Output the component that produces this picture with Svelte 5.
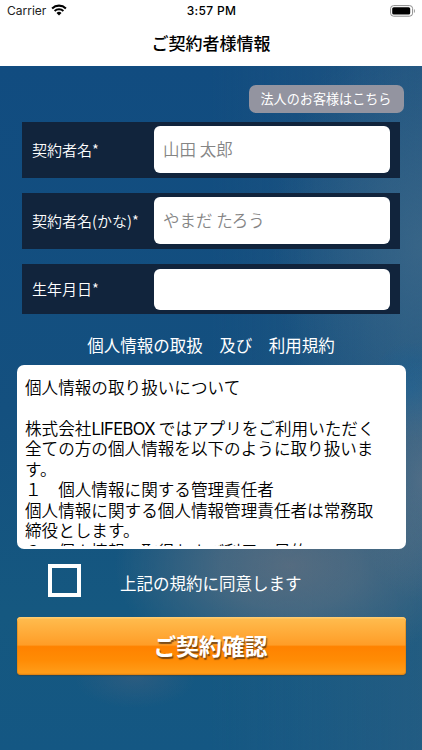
<script>
  const fields = [
    { label: '契約者名*', placeholder: '山田 太郎', size: 'tall' },
    { label: '契約者名(かな)*', placeholder: 'やまだ たろう', size: 'tall' },
    { label: '生年月日*', placeholder: '', size: 'short' }
  ];
  let agreed = $state(false);
</script>

<div class="screen">
  <header>
    <div class="status">
      <div class="carrier">
        <span>Carrier</span>
        <svg width="16" height="12" viewBox="0 0 16 12">
          <path d="M1.1 4.4a10 10 0 0 1 13.8 0" fill="none" stroke="#000" stroke-width="2.1" />
          <path d="M3.6 7a6.4 6.4 0 0 1 8.8 0" fill="none" stroke="#000" stroke-width="1.9" />
          <path d="M8 11.5 5.5 8.9a3.7 3.7 0 0 1 5 0z" />
        </svg>
      </div>
      <span class="time">3:57 PM</span>
      <svg class="battery" width="26" height="12" viewBox="0 0 26 12">
        <rect x="0.6" y="0.6" width="22" height="10.6" rx="3" fill="none" stroke="#8c8c8c" />
        <rect x="2.2" y="2.2" width="18" height="7.4" rx="1.6" />
        <path d="M24 4v4c1.2-.5 1.2-3.5 0-4z" fill="#8c8c8c" />
      </svg>
    </div>
    <h1>ご契約者様情報</h1>
  </header>

  <main>
    <button class="corporate">法人のお客様はこちら</button>
    <form class="fields">
      {#each fields as field}
        <label class="row {field.size}">
          <span>{field.label}</span>
          <input placeholder={field.placeholder} />
        </label>
      {/each}
    </form>

    <h2>個人情報の取扱　及び　利用規約</h2>
    <section class="terms">
      <div class="text">
        <p>個人情報の取り扱いについて</p>
        <p>&nbsp;</p>
        <p>株式会社<span class="latin">LIFEBOX</span> ではアプリをご利用いただく</p>
        <p>全ての方の個人情報を以下のように取り扱いま</p>
        <p>す。</p>
        <p>１　個人情報に関する管理責任者</p>
        <p>個人情報に関する個人情報管理責任者は常務取</p>
        <p>締役とします。</p>
        <p>２　個人情報の取得および利用の目的</p>
      </div>
    </section>

    <div class="agree">
      <button class="check" aria-label="同意" onclick={() => (agreed = !agreed)}>{agreed ? '✓' : ''}</button>
      <span>上記の規約に同意します</span>
    </div>
    <button class="confirm">ご契約確認</button>
  </main>
</div>

<style>
  :global(body) {
    margin: 0;
  }
  .screen {
    width: 422px;
    height: 750px;
    overflow: hidden;
    display: flex;
    flex-direction: column;
    font-family: 'Noto Sans CJK JP', sans-serif;
  }
  button,
  input {
    font-family: inherit;
    border: 0;
    padding: 0;
    box-sizing: border-box;
  }
  header {
    height: 65.5px;
    flex: none;
    background: #fff;
    color: #000;
  }
  .status {
    height: 22px;
    padding: 0 6px 0 7px;
    display: grid;
    grid-template-columns: 1fr auto 1fr;
    align-items: center;
    font: 12px/22px Inter, sans-serif;
  }
  .carrier {
    display: flex;
    align-items: center;
    gap: 5px;
    letter-spacing: 0;
    color: #222;
  }
  .carrier svg {
    margin-top: -2px;
  }
  .time {
    font-weight: 500;
    letter-spacing: 0.3px;
  }
  .battery {
    justify-self: end;
    margin-top: -1px;
  }
  h1 {
    margin: 0;
    font-size: 17px;
    font-weight: 500;
    line-height: 42px;
    text-align: center;
  }
  main {
    flex: 1;
    padding: 19.5px 16.5px 0;
    display: flex;
    flex-direction: column;
    background:
      radial-gradient(ellipse 175px 110px at 290px 500px, rgba(104, 114, 128, 0.75), rgba(98, 114, 130, 0.6) 40%, transparent),
      radial-gradient(ellipse 70px 120px at 422px 415px, rgba(108, 122, 138, 0.6), rgba(98, 118, 136, 0.4) 50%, transparent),
      radial-gradient(ellipse 45px 50px at 412px 325px, rgba(20, 96, 150, 0.6), transparent),
      radial-gradient(ellipse 60px 30px at 135px 612px, rgba(75, 98, 125, 0.4), transparent),
      radial-gradient(ellipse 150px 230px at 422px 180px, rgba(65, 107, 138, 0.7), transparent),
      linear-gradient(90deg, rgba(0, 0, 0, 0) 50%, rgba(60, 100, 130, 0.35)),
      linear-gradient(#114c80, #14507f 50%, #155880 80%, #145783);
  }
  .corporate {
    align-self: flex-end;
    margin-right: 2px;
    width: 155px;
    height: 28px;
    border-radius: 7px;
    background: #9394a0;
    color: #fff;
    font-size: 13.1px;
    font-weight: 400;
    line-height: 28px;
  }
  .fields {
    margin: 9px 5.5px 0;
    display: flex;
    flex-direction: column;
    gap: 15.5px;
  }
  .row {
    display: flex;
    align-items: center;
    box-sizing: border-box;
    height: 55.5px;
    padding: 0 10px;
    background: #11243c;
    color: #fff;
    font-size: 15px;
    font-weight: 350;
  }
  .row.short {
    height: 50px;
  }
  .row span {
    width: 122px;
    flex: none;
    white-space: nowrap;
    margin-top: -1px;
  }
  .row input {
    width: 236px;
    height: 47px;
    border-radius: 6px;
    background: #fff;
    padding: 0 9px 1px;
    font-size: 16.5px;
    font-weight: 350;
  }
  .row.short input {
    height: 41px;
  }
  input::placeholder {
    color: #858585;
    opacity: 1;
  }
  h2 {
    margin: 19px 0 0;
    font-size: 16.5px;
    line-height: 24px;
    font-weight: 400;
    color: #fff;
    text-align: center;
    white-space: nowrap;
  }
  .terms {
    box-sizing: border-box;
    height: 183.5px;
    margin-top: 8px;
    padding: 0 8.5px 2.5px;
    border-radius: 7px;
    background: #fff;
    color: #000;
  }
  .text {
    height: 100%;
    box-sizing: border-box;
    padding-top: 12px;
    overflow: hidden;
  }
  .text p {
    margin: 0;
    font-size: 16.6px;
    font-weight: 350;
    line-height: 20.45px;
    height: 20.45px;
    white-space: nowrap;
  }
  .latin {
    font-family: Inter, sans-serif;
    font-weight: 400;
    letter-spacing: -0.6px;
  }
  .agree {
    display: flex;
    align-items: center;
    height: 33px;
    margin-top: 15.5px;
    padding-left: 31.5px;
    color: #fff;
    font-size: 16.5px;
    font-weight: 400;
  }
  .check {
    width: 33px;
    height: 33px;
    margin-right: 39px;
    border: 4px solid #fff;
    background: transparent;
    color: #fff;
  }
  .agree span {
    padding-top: 4px;
  }
  .confirm {
    height: 58px;
    margin-top: 20px;
    padding-right: 1px;
    padding-bottom: 1px;
    border-radius: 4px;
    background: linear-gradient(#ffbd50 0%, #ff9d27 48%, #ff8200 51%, #ff8c05 75%, #ff9c18 96%, #ef8b14 100%);
    box-shadow:
      inset 0 1.5px 0 #ffcb70,
      inset 0 0 0 1px rgba(210, 125, 20, 0.5),
      0 1px 1px rgba(60, 60, 50, 0.5);
    color: #fff;
    font-size: 22.8px;
    font-weight: 700;
    text-shadow: 1px 1.5px 1px rgba(80, 50, 20, 0.75);
  }
</style>
